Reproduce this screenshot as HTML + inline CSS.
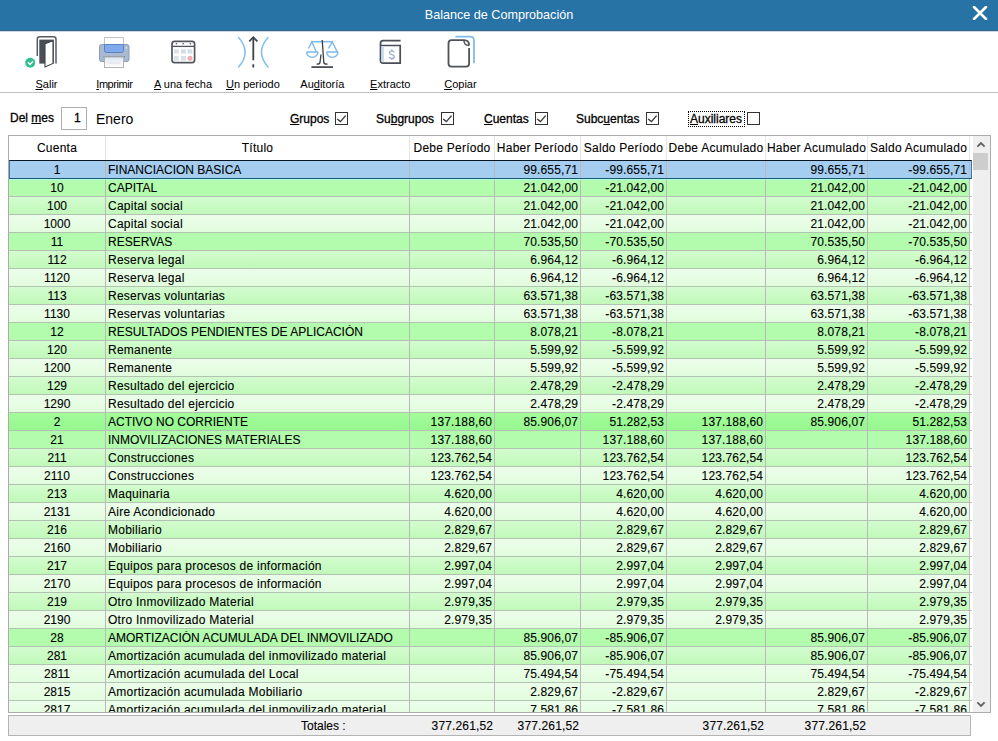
<!DOCTYPE html><html><head><meta charset="utf-8"><style>
*{margin:0;padding:0;box-sizing:border-box}
html,body{width:998px;height:741px;overflow:hidden;background:#fff;font-family:"Liberation Sans",sans-serif;color:#000}
.abs{position:absolute}
#title{left:0;top:0;width:998px;height:32px;background:#2873a6;border-bottom:1px solid #c4d9ea;box-shadow:inset 0 -1px 0 #3a6383}
#title .t{left:0;top:8px;width:998px;text-align:center;color:#fff;font-size:12.6px;line-height:14px}
.tl{font-size:11px;line-height:13px;white-space:nowrap}
.tl u{text-underline-offset:1px}
u{text-decoration:underline;text-underline-offset:1.5px}
.lbl{font-size:12px;line-height:14px;white-space:nowrap;-webkit-text-stroke:0.3px #000}
.lbl u{text-underline-offset:0.5px}
.cb{width:13px;height:13px;border:1px solid #333}
.cell{font-size:12px;line-height:14px;white-space:nowrap;overflow:hidden;-webkit-text-stroke:0.1px #000}
</style></head><body>
<div id="title" class="abs"><div class="t abs">Balance de Comprobación</div><svg class="abs" style="left:972px;top:6px" width="16" height="14" viewBox="0 0 16 14"><path d="M2 1 L14 13 M14 1 L2 13" stroke="#fff" stroke-width="2.6" stroke-linecap="round"/></svg></div>
<svg class="abs" style="left:0;top:0" width="998" height="92" viewBox="0 0 998 92">
<g fill="none" stroke-linecap="butt">
<!-- Door -->
<path d="M37.3 56 V39.2 Q37.3 36.7 39.8 36.7 H53.5 Q56 36.7 56 39.2 V63.6" stroke="#575b60" stroke-width="1.5"/>
<rect x="39.3" y="39.6" width="14.5" height="24" fill="#4a4f56" stroke="none"/>
<path d="M45 43.8 L53 40.8 V63.4 L45 67 Z" fill="#fff" stroke="#3d4248" stroke-width="1.1"/>
<circle cx="30.2" cy="62.8" r="5" fill="#2fbf8c" stroke="none"/>
<path d="M27.8 62.2 L30 64.4 L33 61.2" stroke="#fff" stroke-width="1.5"/>
<!-- Printer -->
<rect x="104.5" y="37.5" width="19" height="8" fill="#fff" stroke="#c2c2c2" stroke-width="1"/>
<rect x="99.5" y="44.5" width="29.5" height="17" rx="2" fill="#a9b9cf" stroke="#8c9cb2" stroke-width="1"/>
<path d="M104.5 44.5 V50.5 Q104.5 52.5 106.5 52.5 H121.5 Q123.5 52.5 123.5 50.5 V44.5 Z" fill="#80aaee" stroke="#5d83c2" stroke-width="1"/>
<path d="M103.5 56.8 H125" stroke="#7e8ea4" stroke-width="1.5"/>
<defs><linearGradient id="pg" x1="0" y1="0" x2="0" y2="1"><stop offset="0" stop-color="#dce6f0"/><stop offset="1" stop-color="#ffffff"/></linearGradient></defs><rect x="104.5" y="57" width="19" height="10.5" fill="url(#pg)" stroke="#b4b4b4" stroke-width="1"/>
<path d="M108.5 63 H119.5" stroke="#d4d8dc" stroke-width="0.8"/>
<circle cx="126.3" cy="47.9" r="0.7" fill="#fff" stroke="none"/>
<!-- Calendar -->
<rect x="172" y="41.4" width="22.6" height="21.2" rx="2.5" fill="#fff" stroke="#54575c" stroke-width="1.7"/>
<path d="M172 46.4 H194.6" stroke="#505358" stroke-width="1.3"/>
<circle cx="176.4" cy="43.7" r="0.8" fill="#505358" stroke="none"/>
<circle cx="183.2" cy="43.7" r="0.8" fill="#505358" stroke="none"/>
<circle cx="190.3" cy="43.7" r="0.8" fill="#505358" stroke="none"/>
<rect x="174" y="49.3" width="4.8" height="4.3" fill="#dde1ea" stroke="none"/>
<rect x="181" y="49.3" width="4.9" height="4.3" fill="#d8dce4" stroke="none"/>
<rect x="187.5" y="49.3" width="4.8" height="4.3" fill="#d2e0ea" stroke="none"/>
<rect x="174" y="56" width="4.8" height="4.6" fill="#dde1ea" stroke="none"/>
<rect x="181" y="56" width="4.9" height="4.6" fill="#d4e2e2" stroke="none"/>
<circle cx="190" cy="58.3" r="2.5" fill="#f4aab2" stroke="none"/>
<!-- Un periodo -->
<path d="M238.2 36.9 Q252 52 238.2 67.4" stroke="#84bef0" stroke-width="1.5"/>
<path d="M268.4 36.9 Q254.5 52 268.4 67.4" stroke="#84bef0" stroke-width="1.5"/>
<path d="M253.3 37.5 V60.2 M253.3 64.3 V67.6" stroke="#3f4448" stroke-width="1.8"/>
<path d="M249.3 41.3 L253.3 37.2 L257.4 41.3" stroke="#3f4448" stroke-width="1.8"/>
<!-- Scales -->
<path d="M311.7 41.7 H332.8" stroke="#7ab8ee" stroke-width="1.5"/>
<path d="M308.5 48.5 L311.8 41.8 L316.3 52 M306.6 52 H318 M306.6 52 A5.7 5.4 0 0 0 318 52" stroke="#7ab8ee" stroke-width="1.4"/>
<path d="M328.5 48.5 L332.2 41.8 L337.2 52 M326.6 52 H338 M326.6 52 A5.7 5.4 0 0 0 338 52" stroke="#7ab8ee" stroke-width="1.4"/>
<path d="M322.2 40 L323.8 62.5 Q324.2 64.2 327.6 64.2" stroke="#3b4046" stroke-width="1.3"/>
<path d="M321 54.5 L320 62.5 Q319.6 64.2 316.6 64.2" stroke="#3b4046" stroke-width="1.3"/>
<path d="M311.4 67.1 H333" stroke="#4a4e54" stroke-width="1.8"/>
<!-- Book -->
<path d="M400.6 40.6 H383 Q380.5 40.6 380.5 43.3 V60.8 Q380.5 63.1 383 63.1 H400.2 V45.5 H380.5" stroke="#4a4e55" stroke-width="1.7"/>
<rect x="381.3" y="46.4" width="2.6" height="15.8" fill="#c8dcf0" stroke="none"/>
<path d="M394.2 52.2 Q393.6 50.8 391.8 50.8 Q389.4 50.8 389.4 52.7 Q389.4 54.1 391.8 54.6 Q394.3 55.1 394.3 56.7 Q394.3 58.4 391.8 58.4 Q389.8 58.4 389.2 57 M391.8 49.2 V50.8 M391.8 58.4 V60" stroke="#98a8c8" stroke-width="1.2"/>
<!-- Copy -->
<path d="M455.4 36.6 H470.2 Q474 36.6 474 40.5 V63.3" stroke="#80bcf0" stroke-width="1.8"/>
<path d="M469.1 47.9 V63.6 Q469.1 66.7 466 66.7 H451.6 Q448.5 66.7 448.5 63.6 V43.3 Q448.5 40.2 451.6 40.2 H464 Q469.1 40.2 469.1 45.5" stroke="#4f5358" stroke-width="1.8"/>
<path d="M464 40.2 Q463.5 45 469.1 45.5" stroke="#4f5358" stroke-width="1.5"/>
</g></svg>
<div class="abs" style="left:0;top:92px;width:998px;height:1px;background:#bfbfbf"></div>
<div class="abs tl" style="left:35.5px;top:78px;"><u>S</u>alir</div>
<div class="abs tl" style="left:96.3px;top:78px;letter-spacing:-0.45px;"><u>I</u>mprimir</div>
<div class="abs tl" style="left:154px;top:78px;"><u>A</u> una fecha</div>
<div class="abs tl" style="left:226px;top:78px;"><u>U</u>n periodo</div>
<div class="abs tl" style="left:300.3px;top:78px;">Au<u>d</u>itoría</div>
<div class="abs tl" style="left:370.1px;top:78px;"><u>E</u>xtracto</div>
<div class="abs tl" style="left:444.2px;top:78px;"><u>C</u>opiar</div>
<div class="abs lbl" style="left:10px;top:111px">Del <u>m</u>es</div>
<div class="abs" style="left:61px;top:107px;width:26px;height:23px;border:1px solid #adadad;background:#fff"></div>
<div class="abs lbl" style="left:74px;top:111px">1</div>
<div class="abs" style="left:96px;top:111px;font-size:14px;line-height:16px">Enero</div>
<div class="abs lbl" style="left:290px;top:112px"><u>G</u>rupos</div>
<div class="abs cb" style="left:335px;top:112px"><svg width="11" height="11" style="position:absolute;left:0;top:0"><path d="M1.2 6 L4.4 8.6 L9.6 2.6" stroke="#3a3a3a" stroke-width="1.4" fill="none"/></svg></div>
<div class="abs lbl" style="left:376px;top:112px">Su<u>b</u>grupos</div>
<div class="abs cb" style="left:441px;top:112px"><svg width="11" height="11" style="position:absolute;left:0;top:0"><path d="M1.2 6 L4.4 8.6 L9.6 2.6" stroke="#3a3a3a" stroke-width="1.4" fill="none"/></svg></div>
<div class="abs lbl" style="left:484px;top:112px"><u>C</u>uentas</div>
<div class="abs cb" style="left:535px;top:112px"><svg width="11" height="11" style="position:absolute;left:0;top:0"><path d="M1.2 6 L4.4 8.6 L9.6 2.6" stroke="#3a3a3a" stroke-width="1.4" fill="none"/></svg></div>
<div class="abs lbl" style="left:576px;top:112px">Subc<u>u</u>entas</div>
<div class="abs cb" style="left:646px;top:112px"><svg width="11" height="11" style="position:absolute;left:0;top:0"><path d="M1.2 6 L4.4 8.6 L9.6 2.6" stroke="#3a3a3a" stroke-width="1.4" fill="none"/></svg></div>
<div class="abs lbl" style="left:690px;top:112px"><u>A</u>uxiliares</div>
<div class="abs cb" style="left:747px;top:112px"></div>
<div class="abs" style="left:688px;top:111px;width:57px;height:16px;border:1px dotted #000"></div>
<div class="abs" style="left:8px;top:135px;width:983px;height:578px;border:1px solid #ababab;background:#fff"></div>
<div class="abs cell" style="left:9px;top:141px;width:96px;text-align:center;letter-spacing:0.25px">Cuenta</div>
<div class="abs cell" style="left:106px;top:141px;width:303px;text-align:center;letter-spacing:0.25px">Título</div>
<div class="abs cell" style="left:410px;top:141px;width:84px;text-align:center;letter-spacing:0.25px">Debe Período</div>
<div class="abs cell" style="left:495px;top:141px;width:85px;text-align:center;letter-spacing:0.25px">Haber Período</div>
<div class="abs cell" style="left:581px;top:141px;width:85px;text-align:center;letter-spacing:0.25px">Saldo Período</div>
<div class="abs cell" style="left:667px;top:141px;width:98px;text-align:center;letter-spacing:0.25px">Debe Acumulado</div>
<div class="abs cell" style="left:766px;top:141px;width:101px;text-align:center;letter-spacing:0.25px">Haber Acumulado</div>
<div class="abs cell" style="left:868px;top:141px;width:101px;text-align:center;letter-spacing:0.25px">Saldo Acumulado</div>
<div class="abs" style="left:105px;top:136px;width:1px;height:24px;background:#e6e6e6"></div>
<div class="abs" style="left:409px;top:136px;width:1px;height:24px;background:#e6e6e6"></div>
<div class="abs" style="left:494px;top:136px;width:1px;height:24px;background:#e6e6e6"></div>
<div class="abs" style="left:580px;top:136px;width:1px;height:24px;background:#e6e6e6"></div>
<div class="abs" style="left:666px;top:136px;width:1px;height:24px;background:#e6e6e6"></div>
<div class="abs" style="left:765px;top:136px;width:1px;height:24px;background:#e6e6e6"></div>
<div class="abs" style="left:867px;top:136px;width:1px;height:24px;background:#e6e6e6"></div>
<div class="abs" style="left:969px;top:136px;width:1px;height:24px;background:#e6e6e6"></div>
<div class="abs" style="left:9px;top:160px;width:963px;height:552px;overflow:hidden">
<div class="abs" style="left:0;top:0px;width:962px;height:18px;background:#a4cdf0"></div>
<div class="abs cell" style="left:0px;top:3px;width:96px;text-align:center">1</div>
<div class="abs cell" style="left:97px;top:3px;width:303px;text-align:left;padding-left:2px;">FINANCIACION BASICA</div>
<div class="abs cell" style="left:486px;top:3px;width:85px;text-align:right;padding-right:1.85px;letter-spacing:0.15px">99.655,71</div>
<div class="abs cell" style="left:572px;top:3px;width:85px;text-align:right;padding-right:1.85px;letter-spacing:0.15px">-99.655,71</div>
<div class="abs cell" style="left:757px;top:3px;width:101px;text-align:right;padding-right:1.85px;letter-spacing:0.15px">99.655,71</div>
<div class="abs cell" style="left:859px;top:3px;width:101px;text-align:right;padding-right:1.85px;letter-spacing:0.15px">-99.655,71</div>
<div class="abs" style="left:0;top:18px;width:960px;height:18px;background:#b3fbad"></div>
<div class="abs cell" style="left:0px;top:21px;width:96px;text-align:center">10</div>
<div class="abs cell" style="left:97px;top:21px;width:303px;text-align:left;padding-left:2px;">CAPITAL</div>
<div class="abs cell" style="left:486px;top:21px;width:85px;text-align:right;padding-right:1.85px;letter-spacing:0.15px">21.042,00</div>
<div class="abs cell" style="left:572px;top:21px;width:85px;text-align:right;padding-right:1.85px;letter-spacing:0.15px">-21.042,00</div>
<div class="abs cell" style="left:757px;top:21px;width:101px;text-align:right;padding-right:1.85px;letter-spacing:0.15px">21.042,00</div>
<div class="abs cell" style="left:859px;top:21px;width:101px;text-align:right;padding-right:1.85px;letter-spacing:0.15px">-21.042,00</div>
<div class="abs" style="left:0;top:36px;width:960px;height:18px;background:linear-gradient(#d4fcd0,#c1f9ba)"></div>
<div class="abs cell" style="left:0px;top:39px;width:96px;text-align:center">100</div>
<div class="abs cell" style="left:97px;top:39px;width:303px;text-align:left;padding-left:2px;letter-spacing:0.25px">Capital social</div>
<div class="abs cell" style="left:486px;top:39px;width:85px;text-align:right;padding-right:1.85px;letter-spacing:0.15px">21.042,00</div>
<div class="abs cell" style="left:572px;top:39px;width:85px;text-align:right;padding-right:1.85px;letter-spacing:0.15px">-21.042,00</div>
<div class="abs cell" style="left:757px;top:39px;width:101px;text-align:right;padding-right:1.85px;letter-spacing:0.15px">21.042,00</div>
<div class="abs cell" style="left:859px;top:39px;width:101px;text-align:right;padding-right:1.85px;letter-spacing:0.15px">-21.042,00</div>
<div class="abs" style="left:0;top:54px;width:960px;height:18px;background:linear-gradient(#ecfeea,#e2fcde)"></div>
<div class="abs cell" style="left:0px;top:57px;width:96px;text-align:center">1000</div>
<div class="abs cell" style="left:97px;top:57px;width:303px;text-align:left;padding-left:2px;letter-spacing:0.25px">Capital social</div>
<div class="abs cell" style="left:486px;top:57px;width:85px;text-align:right;padding-right:1.85px;letter-spacing:0.15px">21.042,00</div>
<div class="abs cell" style="left:572px;top:57px;width:85px;text-align:right;padding-right:1.85px;letter-spacing:0.15px">-21.042,00</div>
<div class="abs cell" style="left:757px;top:57px;width:101px;text-align:right;padding-right:1.85px;letter-spacing:0.15px">21.042,00</div>
<div class="abs cell" style="left:859px;top:57px;width:101px;text-align:right;padding-right:1.85px;letter-spacing:0.15px">-21.042,00</div>
<div class="abs" style="left:0;top:72px;width:960px;height:18px;background:#b3fbad"></div>
<div class="abs cell" style="left:0px;top:75px;width:96px;text-align:center">11</div>
<div class="abs cell" style="left:97px;top:75px;width:303px;text-align:left;padding-left:2px;">RESERVAS</div>
<div class="abs cell" style="left:486px;top:75px;width:85px;text-align:right;padding-right:1.85px;letter-spacing:0.15px">70.535,50</div>
<div class="abs cell" style="left:572px;top:75px;width:85px;text-align:right;padding-right:1.85px;letter-spacing:0.15px">-70.535,50</div>
<div class="abs cell" style="left:757px;top:75px;width:101px;text-align:right;padding-right:1.85px;letter-spacing:0.15px">70.535,50</div>
<div class="abs cell" style="left:859px;top:75px;width:101px;text-align:right;padding-right:1.85px;letter-spacing:0.15px">-70.535,50</div>
<div class="abs" style="left:0;top:90px;width:960px;height:18px;background:linear-gradient(#d4fcd0,#c1f9ba)"></div>
<div class="abs cell" style="left:0px;top:93px;width:96px;text-align:center">112</div>
<div class="abs cell" style="left:97px;top:93px;width:303px;text-align:left;padding-left:2px;letter-spacing:0.25px">Reserva legal</div>
<div class="abs cell" style="left:486px;top:93px;width:85px;text-align:right;padding-right:1.85px;letter-spacing:0.15px">6.964,12</div>
<div class="abs cell" style="left:572px;top:93px;width:85px;text-align:right;padding-right:1.85px;letter-spacing:0.15px">-6.964,12</div>
<div class="abs cell" style="left:757px;top:93px;width:101px;text-align:right;padding-right:1.85px;letter-spacing:0.15px">6.964,12</div>
<div class="abs cell" style="left:859px;top:93px;width:101px;text-align:right;padding-right:1.85px;letter-spacing:0.15px">-6.964,12</div>
<div class="abs" style="left:0;top:108px;width:960px;height:18px;background:linear-gradient(#ecfeea,#e2fcde)"></div>
<div class="abs cell" style="left:0px;top:111px;width:96px;text-align:center">1120</div>
<div class="abs cell" style="left:97px;top:111px;width:303px;text-align:left;padding-left:2px;letter-spacing:0.25px">Reserva legal</div>
<div class="abs cell" style="left:486px;top:111px;width:85px;text-align:right;padding-right:1.85px;letter-spacing:0.15px">6.964,12</div>
<div class="abs cell" style="left:572px;top:111px;width:85px;text-align:right;padding-right:1.85px;letter-spacing:0.15px">-6.964,12</div>
<div class="abs cell" style="left:757px;top:111px;width:101px;text-align:right;padding-right:1.85px;letter-spacing:0.15px">6.964,12</div>
<div class="abs cell" style="left:859px;top:111px;width:101px;text-align:right;padding-right:1.85px;letter-spacing:0.15px">-6.964,12</div>
<div class="abs" style="left:0;top:126px;width:960px;height:18px;background:linear-gradient(#d4fcd0,#c1f9ba)"></div>
<div class="abs cell" style="left:0px;top:129px;width:96px;text-align:center">113</div>
<div class="abs cell" style="left:97px;top:129px;width:303px;text-align:left;padding-left:2px;letter-spacing:0.25px">Reservas voluntarias</div>
<div class="abs cell" style="left:486px;top:129px;width:85px;text-align:right;padding-right:1.85px;letter-spacing:0.15px">63.571,38</div>
<div class="abs cell" style="left:572px;top:129px;width:85px;text-align:right;padding-right:1.85px;letter-spacing:0.15px">-63.571,38</div>
<div class="abs cell" style="left:757px;top:129px;width:101px;text-align:right;padding-right:1.85px;letter-spacing:0.15px">63.571,38</div>
<div class="abs cell" style="left:859px;top:129px;width:101px;text-align:right;padding-right:1.85px;letter-spacing:0.15px">-63.571,38</div>
<div class="abs" style="left:0;top:144px;width:960px;height:18px;background:linear-gradient(#ecfeea,#e2fcde)"></div>
<div class="abs cell" style="left:0px;top:147px;width:96px;text-align:center">1130</div>
<div class="abs cell" style="left:97px;top:147px;width:303px;text-align:left;padding-left:2px;letter-spacing:0.25px">Reservas voluntarias</div>
<div class="abs cell" style="left:486px;top:147px;width:85px;text-align:right;padding-right:1.85px;letter-spacing:0.15px">63.571,38</div>
<div class="abs cell" style="left:572px;top:147px;width:85px;text-align:right;padding-right:1.85px;letter-spacing:0.15px">-63.571,38</div>
<div class="abs cell" style="left:757px;top:147px;width:101px;text-align:right;padding-right:1.85px;letter-spacing:0.15px">63.571,38</div>
<div class="abs cell" style="left:859px;top:147px;width:101px;text-align:right;padding-right:1.85px;letter-spacing:0.15px">-63.571,38</div>
<div class="abs" style="left:0;top:162px;width:960px;height:18px;background:#b3fbad"></div>
<div class="abs cell" style="left:0px;top:165px;width:96px;text-align:center">12</div>
<div class="abs cell" style="left:97px;top:165px;width:303px;text-align:left;padding-left:2px;">RESULTADOS PENDIENTES DE APLICACIÓN</div>
<div class="abs cell" style="left:486px;top:165px;width:85px;text-align:right;padding-right:1.85px;letter-spacing:0.15px">8.078,21</div>
<div class="abs cell" style="left:572px;top:165px;width:85px;text-align:right;padding-right:1.85px;letter-spacing:0.15px">-8.078,21</div>
<div class="abs cell" style="left:757px;top:165px;width:101px;text-align:right;padding-right:1.85px;letter-spacing:0.15px">8.078,21</div>
<div class="abs cell" style="left:859px;top:165px;width:101px;text-align:right;padding-right:1.85px;letter-spacing:0.15px">-8.078,21</div>
<div class="abs" style="left:0;top:180px;width:960px;height:18px;background:linear-gradient(#d4fcd0,#c1f9ba)"></div>
<div class="abs cell" style="left:0px;top:183px;width:96px;text-align:center">120</div>
<div class="abs cell" style="left:97px;top:183px;width:303px;text-align:left;padding-left:2px;letter-spacing:0.25px">Remanente</div>
<div class="abs cell" style="left:486px;top:183px;width:85px;text-align:right;padding-right:1.85px;letter-spacing:0.15px">5.599,92</div>
<div class="abs cell" style="left:572px;top:183px;width:85px;text-align:right;padding-right:1.85px;letter-spacing:0.15px">-5.599,92</div>
<div class="abs cell" style="left:757px;top:183px;width:101px;text-align:right;padding-right:1.85px;letter-spacing:0.15px">5.599,92</div>
<div class="abs cell" style="left:859px;top:183px;width:101px;text-align:right;padding-right:1.85px;letter-spacing:0.15px">-5.599,92</div>
<div class="abs" style="left:0;top:198px;width:960px;height:18px;background:linear-gradient(#ecfeea,#e2fcde)"></div>
<div class="abs cell" style="left:0px;top:201px;width:96px;text-align:center">1200</div>
<div class="abs cell" style="left:97px;top:201px;width:303px;text-align:left;padding-left:2px;letter-spacing:0.25px">Remanente</div>
<div class="abs cell" style="left:486px;top:201px;width:85px;text-align:right;padding-right:1.85px;letter-spacing:0.15px">5.599,92</div>
<div class="abs cell" style="left:572px;top:201px;width:85px;text-align:right;padding-right:1.85px;letter-spacing:0.15px">-5.599,92</div>
<div class="abs cell" style="left:757px;top:201px;width:101px;text-align:right;padding-right:1.85px;letter-spacing:0.15px">5.599,92</div>
<div class="abs cell" style="left:859px;top:201px;width:101px;text-align:right;padding-right:1.85px;letter-spacing:0.15px">-5.599,92</div>
<div class="abs" style="left:0;top:216px;width:960px;height:18px;background:linear-gradient(#d4fcd0,#c1f9ba)"></div>
<div class="abs cell" style="left:0px;top:219px;width:96px;text-align:center">129</div>
<div class="abs cell" style="left:97px;top:219px;width:303px;text-align:left;padding-left:2px;letter-spacing:0.25px">Resultado del ejercicio</div>
<div class="abs cell" style="left:486px;top:219px;width:85px;text-align:right;padding-right:1.85px;letter-spacing:0.15px">2.478,29</div>
<div class="abs cell" style="left:572px;top:219px;width:85px;text-align:right;padding-right:1.85px;letter-spacing:0.15px">-2.478,29</div>
<div class="abs cell" style="left:757px;top:219px;width:101px;text-align:right;padding-right:1.85px;letter-spacing:0.15px">2.478,29</div>
<div class="abs cell" style="left:859px;top:219px;width:101px;text-align:right;padding-right:1.85px;letter-spacing:0.15px">-2.478,29</div>
<div class="abs" style="left:0;top:234px;width:960px;height:18px;background:linear-gradient(#ecfeea,#e2fcde)"></div>
<div class="abs cell" style="left:0px;top:237px;width:96px;text-align:center">1290</div>
<div class="abs cell" style="left:97px;top:237px;width:303px;text-align:left;padding-left:2px;letter-spacing:0.25px">Resultado del ejercicio</div>
<div class="abs cell" style="left:486px;top:237px;width:85px;text-align:right;padding-right:1.85px;letter-spacing:0.15px">2.478,29</div>
<div class="abs cell" style="left:572px;top:237px;width:85px;text-align:right;padding-right:1.85px;letter-spacing:0.15px">-2.478,29</div>
<div class="abs cell" style="left:757px;top:237px;width:101px;text-align:right;padding-right:1.85px;letter-spacing:0.15px">2.478,29</div>
<div class="abs cell" style="left:859px;top:237px;width:101px;text-align:right;padding-right:1.85px;letter-spacing:0.15px">-2.478,29</div>
<div class="abs" style="left:0;top:252px;width:960px;height:18px;background:linear-gradient(#a2fc9a,#97f78f)"></div>
<div class="abs cell" style="left:0px;top:255px;width:96px;text-align:center">2</div>
<div class="abs cell" style="left:97px;top:255px;width:303px;text-align:left;padding-left:2px;">ACTIVO NO CORRIENTE</div>
<div class="abs cell" style="left:401px;top:255px;width:84px;text-align:right;padding-right:1.85px;letter-spacing:0.15px">137.188,60</div>
<div class="abs cell" style="left:486px;top:255px;width:85px;text-align:right;padding-right:1.85px;letter-spacing:0.15px">85.906,07</div>
<div class="abs cell" style="left:572px;top:255px;width:85px;text-align:right;padding-right:1.85px;letter-spacing:0.15px">51.282,53</div>
<div class="abs cell" style="left:658px;top:255px;width:98px;text-align:right;padding-right:1.85px;letter-spacing:0.15px">137.188,60</div>
<div class="abs cell" style="left:757px;top:255px;width:101px;text-align:right;padding-right:1.85px;letter-spacing:0.15px">85.906,07</div>
<div class="abs cell" style="left:859px;top:255px;width:101px;text-align:right;padding-right:1.85px;letter-spacing:0.15px">51.282,53</div>
<div class="abs" style="left:0;top:270px;width:960px;height:18px;background:#b3fbad"></div>
<div class="abs cell" style="left:0px;top:273px;width:96px;text-align:center">21</div>
<div class="abs cell" style="left:97px;top:273px;width:303px;text-align:left;padding-left:2px;">INMOVILIZACIONES MATERIALES</div>
<div class="abs cell" style="left:401px;top:273px;width:84px;text-align:right;padding-right:1.85px;letter-spacing:0.15px">137.188,60</div>
<div class="abs cell" style="left:572px;top:273px;width:85px;text-align:right;padding-right:1.85px;letter-spacing:0.15px">137.188,60</div>
<div class="abs cell" style="left:658px;top:273px;width:98px;text-align:right;padding-right:1.85px;letter-spacing:0.15px">137.188,60</div>
<div class="abs cell" style="left:859px;top:273px;width:101px;text-align:right;padding-right:1.85px;letter-spacing:0.15px">137.188,60</div>
<div class="abs" style="left:0;top:288px;width:960px;height:18px;background:linear-gradient(#d4fcd0,#c1f9ba)"></div>
<div class="abs cell" style="left:0px;top:291px;width:96px;text-align:center">211</div>
<div class="abs cell" style="left:97px;top:291px;width:303px;text-align:left;padding-left:2px;letter-spacing:0.25px">Construcciones</div>
<div class="abs cell" style="left:401px;top:291px;width:84px;text-align:right;padding-right:1.85px;letter-spacing:0.15px">123.762,54</div>
<div class="abs cell" style="left:572px;top:291px;width:85px;text-align:right;padding-right:1.85px;letter-spacing:0.15px">123.762,54</div>
<div class="abs cell" style="left:658px;top:291px;width:98px;text-align:right;padding-right:1.85px;letter-spacing:0.15px">123.762,54</div>
<div class="abs cell" style="left:859px;top:291px;width:101px;text-align:right;padding-right:1.85px;letter-spacing:0.15px">123.762,54</div>
<div class="abs" style="left:0;top:306px;width:960px;height:18px;background:linear-gradient(#ecfeea,#e2fcde)"></div>
<div class="abs cell" style="left:0px;top:309px;width:96px;text-align:center">2110</div>
<div class="abs cell" style="left:97px;top:309px;width:303px;text-align:left;padding-left:2px;letter-spacing:0.25px">Construcciones</div>
<div class="abs cell" style="left:401px;top:309px;width:84px;text-align:right;padding-right:1.85px;letter-spacing:0.15px">123.762,54</div>
<div class="abs cell" style="left:572px;top:309px;width:85px;text-align:right;padding-right:1.85px;letter-spacing:0.15px">123.762,54</div>
<div class="abs cell" style="left:658px;top:309px;width:98px;text-align:right;padding-right:1.85px;letter-spacing:0.15px">123.762,54</div>
<div class="abs cell" style="left:859px;top:309px;width:101px;text-align:right;padding-right:1.85px;letter-spacing:0.15px">123.762,54</div>
<div class="abs" style="left:0;top:324px;width:960px;height:18px;background:linear-gradient(#d4fcd0,#c1f9ba)"></div>
<div class="abs cell" style="left:0px;top:327px;width:96px;text-align:center">213</div>
<div class="abs cell" style="left:97px;top:327px;width:303px;text-align:left;padding-left:2px;letter-spacing:0.25px">Maquinaria</div>
<div class="abs cell" style="left:401px;top:327px;width:84px;text-align:right;padding-right:1.85px;letter-spacing:0.15px">4.620,00</div>
<div class="abs cell" style="left:572px;top:327px;width:85px;text-align:right;padding-right:1.85px;letter-spacing:0.15px">4.620,00</div>
<div class="abs cell" style="left:658px;top:327px;width:98px;text-align:right;padding-right:1.85px;letter-spacing:0.15px">4.620,00</div>
<div class="abs cell" style="left:859px;top:327px;width:101px;text-align:right;padding-right:1.85px;letter-spacing:0.15px">4.620,00</div>
<div class="abs" style="left:0;top:342px;width:960px;height:18px;background:linear-gradient(#ecfeea,#e2fcde)"></div>
<div class="abs cell" style="left:0px;top:345px;width:96px;text-align:center">2131</div>
<div class="abs cell" style="left:97px;top:345px;width:303px;text-align:left;padding-left:2px;letter-spacing:0.25px">Aire Acondicionado</div>
<div class="abs cell" style="left:401px;top:345px;width:84px;text-align:right;padding-right:1.85px;letter-spacing:0.15px">4.620,00</div>
<div class="abs cell" style="left:572px;top:345px;width:85px;text-align:right;padding-right:1.85px;letter-spacing:0.15px">4.620,00</div>
<div class="abs cell" style="left:658px;top:345px;width:98px;text-align:right;padding-right:1.85px;letter-spacing:0.15px">4.620,00</div>
<div class="abs cell" style="left:859px;top:345px;width:101px;text-align:right;padding-right:1.85px;letter-spacing:0.15px">4.620,00</div>
<div class="abs" style="left:0;top:360px;width:960px;height:18px;background:linear-gradient(#d4fcd0,#c1f9ba)"></div>
<div class="abs cell" style="left:0px;top:363px;width:96px;text-align:center">216</div>
<div class="abs cell" style="left:97px;top:363px;width:303px;text-align:left;padding-left:2px;letter-spacing:0.25px">Mobiliario</div>
<div class="abs cell" style="left:401px;top:363px;width:84px;text-align:right;padding-right:1.85px;letter-spacing:0.15px">2.829,67</div>
<div class="abs cell" style="left:572px;top:363px;width:85px;text-align:right;padding-right:1.85px;letter-spacing:0.15px">2.829,67</div>
<div class="abs cell" style="left:658px;top:363px;width:98px;text-align:right;padding-right:1.85px;letter-spacing:0.15px">2.829,67</div>
<div class="abs cell" style="left:859px;top:363px;width:101px;text-align:right;padding-right:1.85px;letter-spacing:0.15px">2.829,67</div>
<div class="abs" style="left:0;top:378px;width:960px;height:18px;background:linear-gradient(#ecfeea,#e2fcde)"></div>
<div class="abs cell" style="left:0px;top:381px;width:96px;text-align:center">2160</div>
<div class="abs cell" style="left:97px;top:381px;width:303px;text-align:left;padding-left:2px;letter-spacing:0.25px">Mobiliario</div>
<div class="abs cell" style="left:401px;top:381px;width:84px;text-align:right;padding-right:1.85px;letter-spacing:0.15px">2.829,67</div>
<div class="abs cell" style="left:572px;top:381px;width:85px;text-align:right;padding-right:1.85px;letter-spacing:0.15px">2.829,67</div>
<div class="abs cell" style="left:658px;top:381px;width:98px;text-align:right;padding-right:1.85px;letter-spacing:0.15px">2.829,67</div>
<div class="abs cell" style="left:859px;top:381px;width:101px;text-align:right;padding-right:1.85px;letter-spacing:0.15px">2.829,67</div>
<div class="abs" style="left:0;top:396px;width:960px;height:18px;background:linear-gradient(#d4fcd0,#c1f9ba)"></div>
<div class="abs cell" style="left:0px;top:399px;width:96px;text-align:center">217</div>
<div class="abs cell" style="left:97px;top:399px;width:303px;text-align:left;padding-left:2px;letter-spacing:0.25px">Equipos para procesos de información</div>
<div class="abs cell" style="left:401px;top:399px;width:84px;text-align:right;padding-right:1.85px;letter-spacing:0.15px">2.997,04</div>
<div class="abs cell" style="left:572px;top:399px;width:85px;text-align:right;padding-right:1.85px;letter-spacing:0.15px">2.997,04</div>
<div class="abs cell" style="left:658px;top:399px;width:98px;text-align:right;padding-right:1.85px;letter-spacing:0.15px">2.997,04</div>
<div class="abs cell" style="left:859px;top:399px;width:101px;text-align:right;padding-right:1.85px;letter-spacing:0.15px">2.997,04</div>
<div class="abs" style="left:0;top:414px;width:960px;height:18px;background:linear-gradient(#ecfeea,#e2fcde)"></div>
<div class="abs cell" style="left:0px;top:417px;width:96px;text-align:center">2170</div>
<div class="abs cell" style="left:97px;top:417px;width:303px;text-align:left;padding-left:2px;letter-spacing:0.25px">Equipos para procesos de información</div>
<div class="abs cell" style="left:401px;top:417px;width:84px;text-align:right;padding-right:1.85px;letter-spacing:0.15px">2.997,04</div>
<div class="abs cell" style="left:572px;top:417px;width:85px;text-align:right;padding-right:1.85px;letter-spacing:0.15px">2.997,04</div>
<div class="abs cell" style="left:658px;top:417px;width:98px;text-align:right;padding-right:1.85px;letter-spacing:0.15px">2.997,04</div>
<div class="abs cell" style="left:859px;top:417px;width:101px;text-align:right;padding-right:1.85px;letter-spacing:0.15px">2.997,04</div>
<div class="abs" style="left:0;top:432px;width:960px;height:18px;background:linear-gradient(#d4fcd0,#c1f9ba)"></div>
<div class="abs cell" style="left:0px;top:435px;width:96px;text-align:center">219</div>
<div class="abs cell" style="left:97px;top:435px;width:303px;text-align:left;padding-left:2px;letter-spacing:0.25px">Otro Inmovilizado Material</div>
<div class="abs cell" style="left:401px;top:435px;width:84px;text-align:right;padding-right:1.85px;letter-spacing:0.15px">2.979,35</div>
<div class="abs cell" style="left:572px;top:435px;width:85px;text-align:right;padding-right:1.85px;letter-spacing:0.15px">2.979,35</div>
<div class="abs cell" style="left:658px;top:435px;width:98px;text-align:right;padding-right:1.85px;letter-spacing:0.15px">2.979,35</div>
<div class="abs cell" style="left:859px;top:435px;width:101px;text-align:right;padding-right:1.85px;letter-spacing:0.15px">2.979,35</div>
<div class="abs" style="left:0;top:450px;width:960px;height:18px;background:linear-gradient(#ecfeea,#e2fcde)"></div>
<div class="abs cell" style="left:0px;top:453px;width:96px;text-align:center">2190</div>
<div class="abs cell" style="left:97px;top:453px;width:303px;text-align:left;padding-left:2px;letter-spacing:0.25px">Otro Inmovilizado Material</div>
<div class="abs cell" style="left:401px;top:453px;width:84px;text-align:right;padding-right:1.85px;letter-spacing:0.15px">2.979,35</div>
<div class="abs cell" style="left:572px;top:453px;width:85px;text-align:right;padding-right:1.85px;letter-spacing:0.15px">2.979,35</div>
<div class="abs cell" style="left:658px;top:453px;width:98px;text-align:right;padding-right:1.85px;letter-spacing:0.15px">2.979,35</div>
<div class="abs cell" style="left:859px;top:453px;width:101px;text-align:right;padding-right:1.85px;letter-spacing:0.15px">2.979,35</div>
<div class="abs" style="left:0;top:468px;width:960px;height:18px;background:#b3fbad"></div>
<div class="abs cell" style="left:0px;top:471px;width:96px;text-align:center">28</div>
<div class="abs cell" style="left:97px;top:471px;width:303px;text-align:left;padding-left:2px;">AMORTIZACIÓN ACUMULADA DEL INMOVILIZADO</div>
<div class="abs cell" style="left:486px;top:471px;width:85px;text-align:right;padding-right:1.85px;letter-spacing:0.15px">85.906,07</div>
<div class="abs cell" style="left:572px;top:471px;width:85px;text-align:right;padding-right:1.85px;letter-spacing:0.15px">-85.906,07</div>
<div class="abs cell" style="left:757px;top:471px;width:101px;text-align:right;padding-right:1.85px;letter-spacing:0.15px">85.906,07</div>
<div class="abs cell" style="left:859px;top:471px;width:101px;text-align:right;padding-right:1.85px;letter-spacing:0.15px">-85.906,07</div>
<div class="abs" style="left:0;top:486px;width:960px;height:18px;background:linear-gradient(#d4fcd0,#c1f9ba)"></div>
<div class="abs cell" style="left:0px;top:489px;width:96px;text-align:center">281</div>
<div class="abs cell" style="left:97px;top:489px;width:303px;text-align:left;padding-left:2px;letter-spacing:0.25px">Amortización acumulada del inmovilizado material</div>
<div class="abs cell" style="left:486px;top:489px;width:85px;text-align:right;padding-right:1.85px;letter-spacing:0.15px">85.906,07</div>
<div class="abs cell" style="left:572px;top:489px;width:85px;text-align:right;padding-right:1.85px;letter-spacing:0.15px">-85.906,07</div>
<div class="abs cell" style="left:757px;top:489px;width:101px;text-align:right;padding-right:1.85px;letter-spacing:0.15px">85.906,07</div>
<div class="abs cell" style="left:859px;top:489px;width:101px;text-align:right;padding-right:1.85px;letter-spacing:0.15px">-85.906,07</div>
<div class="abs" style="left:0;top:504px;width:960px;height:18px;background:linear-gradient(#ecfeea,#e2fcde)"></div>
<div class="abs cell" style="left:0px;top:507px;width:96px;text-align:center">2811</div>
<div class="abs cell" style="left:97px;top:507px;width:303px;text-align:left;padding-left:2px;letter-spacing:0.25px">Amortización acumulada del Local</div>
<div class="abs cell" style="left:486px;top:507px;width:85px;text-align:right;padding-right:1.85px;letter-spacing:0.15px">75.494,54</div>
<div class="abs cell" style="left:572px;top:507px;width:85px;text-align:right;padding-right:1.85px;letter-spacing:0.15px">-75.494,54</div>
<div class="abs cell" style="left:757px;top:507px;width:101px;text-align:right;padding-right:1.85px;letter-spacing:0.15px">75.494,54</div>
<div class="abs cell" style="left:859px;top:507px;width:101px;text-align:right;padding-right:1.85px;letter-spacing:0.15px">-75.494,54</div>
<div class="abs" style="left:0;top:522px;width:960px;height:18px;background:linear-gradient(#ecfeea,#e2fcde)"></div>
<div class="abs cell" style="left:0px;top:525px;width:96px;text-align:center">2815</div>
<div class="abs cell" style="left:97px;top:525px;width:303px;text-align:left;padding-left:2px;letter-spacing:0.25px">Amortización acumulada Mobiliario</div>
<div class="abs cell" style="left:486px;top:525px;width:85px;text-align:right;padding-right:1.85px;letter-spacing:0.15px">2.829,67</div>
<div class="abs cell" style="left:572px;top:525px;width:85px;text-align:right;padding-right:1.85px;letter-spacing:0.15px">-2.829,67</div>
<div class="abs cell" style="left:757px;top:525px;width:101px;text-align:right;padding-right:1.85px;letter-spacing:0.15px">2.829,67</div>
<div class="abs cell" style="left:859px;top:525px;width:101px;text-align:right;padding-right:1.85px;letter-spacing:0.15px">-2.829,67</div>
<div class="abs" style="left:0;top:540px;width:960px;height:18px;background:linear-gradient(#ecfeea,#e2fcde)"></div>
<div class="abs cell" style="left:0px;top:543px;width:96px;text-align:center">2817</div>
<div class="abs cell" style="left:97px;top:543px;width:303px;text-align:left;padding-left:2px;letter-spacing:0.25px">Amortización acumulada del inmovilizado material</div>
<div class="abs cell" style="left:486px;top:543px;width:85px;text-align:right;padding-right:1.85px;letter-spacing:0.15px">7.581,86</div>
<div class="abs cell" style="left:572px;top:543px;width:85px;text-align:right;padding-right:1.85px;letter-spacing:0.15px">-7.581,86</div>
<div class="abs cell" style="left:757px;top:543px;width:101px;text-align:right;padding-right:1.85px;letter-spacing:0.15px">7.581,86</div>
<div class="abs cell" style="left:859px;top:543px;width:101px;text-align:right;padding-right:1.85px;letter-spacing:0.15px">-7.581,86</div>
<div class="abs" style="left:0;top:18px;width:963px;height:1px;background:#b4c2b4"></div>
<div class="abs" style="left:0;top:36px;width:963px;height:1px;background:#b4c2b4"></div>
<div class="abs" style="left:0;top:54px;width:963px;height:1px;background:#b4c2b4"></div>
<div class="abs" style="left:0;top:72px;width:963px;height:1px;background:#b4c2b4"></div>
<div class="abs" style="left:0;top:90px;width:963px;height:1px;background:#b4c2b4"></div>
<div class="abs" style="left:0;top:108px;width:963px;height:1px;background:#b4c2b4"></div>
<div class="abs" style="left:0;top:126px;width:963px;height:1px;background:#b4c2b4"></div>
<div class="abs" style="left:0;top:144px;width:963px;height:1px;background:#b4c2b4"></div>
<div class="abs" style="left:0;top:162px;width:963px;height:1px;background:#b4c2b4"></div>
<div class="abs" style="left:0;top:180px;width:963px;height:1px;background:#b4c2b4"></div>
<div class="abs" style="left:0;top:198px;width:963px;height:1px;background:#b4c2b4"></div>
<div class="abs" style="left:0;top:216px;width:963px;height:1px;background:#b4c2b4"></div>
<div class="abs" style="left:0;top:234px;width:963px;height:1px;background:#b4c2b4"></div>
<div class="abs" style="left:0;top:252px;width:963px;height:1px;background:#b4c2b4"></div>
<div class="abs" style="left:0;top:270px;width:963px;height:1px;background:#b4c2b4"></div>
<div class="abs" style="left:0;top:288px;width:963px;height:1px;background:#b4c2b4"></div>
<div class="abs" style="left:0;top:306px;width:963px;height:1px;background:#b4c2b4"></div>
<div class="abs" style="left:0;top:324px;width:963px;height:1px;background:#b4c2b4"></div>
<div class="abs" style="left:0;top:342px;width:963px;height:1px;background:#b4c2b4"></div>
<div class="abs" style="left:0;top:360px;width:963px;height:1px;background:#b4c2b4"></div>
<div class="abs" style="left:0;top:378px;width:963px;height:1px;background:#b4c2b4"></div>
<div class="abs" style="left:0;top:396px;width:963px;height:1px;background:#b4c2b4"></div>
<div class="abs" style="left:0;top:414px;width:963px;height:1px;background:#b4c2b4"></div>
<div class="abs" style="left:0;top:432px;width:963px;height:1px;background:#b4c2b4"></div>
<div class="abs" style="left:0;top:450px;width:963px;height:1px;background:#b4c2b4"></div>
<div class="abs" style="left:0;top:468px;width:963px;height:1px;background:#b4c2b4"></div>
<div class="abs" style="left:0;top:486px;width:963px;height:1px;background:#b4c2b4"></div>
<div class="abs" style="left:0;top:504px;width:963px;height:1px;background:#b4c2b4"></div>
<div class="abs" style="left:0;top:522px;width:963px;height:1px;background:#b4c2b4"></div>
<div class="abs" style="left:0;top:540px;width:963px;height:1px;background:#b4c2b4"></div>
<div class="abs" style="left:0;top:558px;width:963px;height:1px;background:#b4c2b4"></div>
<div class="abs" style="left:96px;top:0;width:1px;height:552px;background:#b9b9b9"></div>
<div class="abs" style="left:400px;top:0;width:1px;height:552px;background:#b9b9b9"></div>
<div class="abs" style="left:485px;top:0;width:1px;height:552px;background:#b9b9b9"></div>
<div class="abs" style="left:571px;top:0;width:1px;height:552px;background:#b9b9b9"></div>
<div class="abs" style="left:657px;top:0;width:1px;height:552px;background:#b9b9b9"></div>
<div class="abs" style="left:756px;top:0;width:1px;height:552px;background:#b9b9b9"></div>
<div class="abs" style="left:858px;top:0;width:1px;height:552px;background:#b9b9b9"></div>
<div class="abs" style="left:960px;top:0;width:1px;height:552px;background:#b9b9b9"></div>
<div class="abs" style="left:0;top:0;width:963px;height:19px;border:1px solid #3a78b0;border-top-color:#0a1420;border-bottom-color:#1a5a70"></div>
<div class="abs" style="left:1px;top:19px;width:959px;height:1px;background:#b0fbe8"></div>
</div>
<div class="abs" style="left:973px;top:136px;width:17px;height:576px;background:#efefef"></div>
<div class="abs" style="left:973px;top:153px;width:15px;height:17px;background:#cdcdcd"></div>
<svg class="abs" style="left:975px;top:139px" width="12" height="10"><path d="M2.4 7.6 L6 4 L9.6 7.6" stroke="#606060" stroke-width="1.8" fill="none"/></svg>
<svg class="abs" style="left:975px;top:698.5px" width="12" height="10"><path d="M2.4 3.4 L6 7 L9.6 3.4" stroke="#606060" stroke-width="1.8" fill="none"/></svg>
<div class="abs" style="left:8px;top:715px;width:963px;height:21px;border:1px solid #b4b4b4;background:#efefef"></div>
<div class="abs cell" style="left:301px;top:719px">Totales :</div>
<div class="abs cell" style="left:394px;top:719px;width:100px;text-align:right;padding-right:0.85px;letter-spacing:0.15px">377.261,52</div>
<div class="abs cell" style="left:480px;top:719px;width:100px;text-align:right;padding-right:0.85px;letter-spacing:0.15px">377.261,52</div>
<div class="abs cell" style="left:665px;top:719px;width:100px;text-align:right;padding-right:0.85px;letter-spacing:0.15px">377.261,52</div>
<div class="abs cell" style="left:767px;top:719px;width:100px;text-align:right;padding-right:0.85px;letter-spacing:0.15px">377.261,52</div>
</body></html>
